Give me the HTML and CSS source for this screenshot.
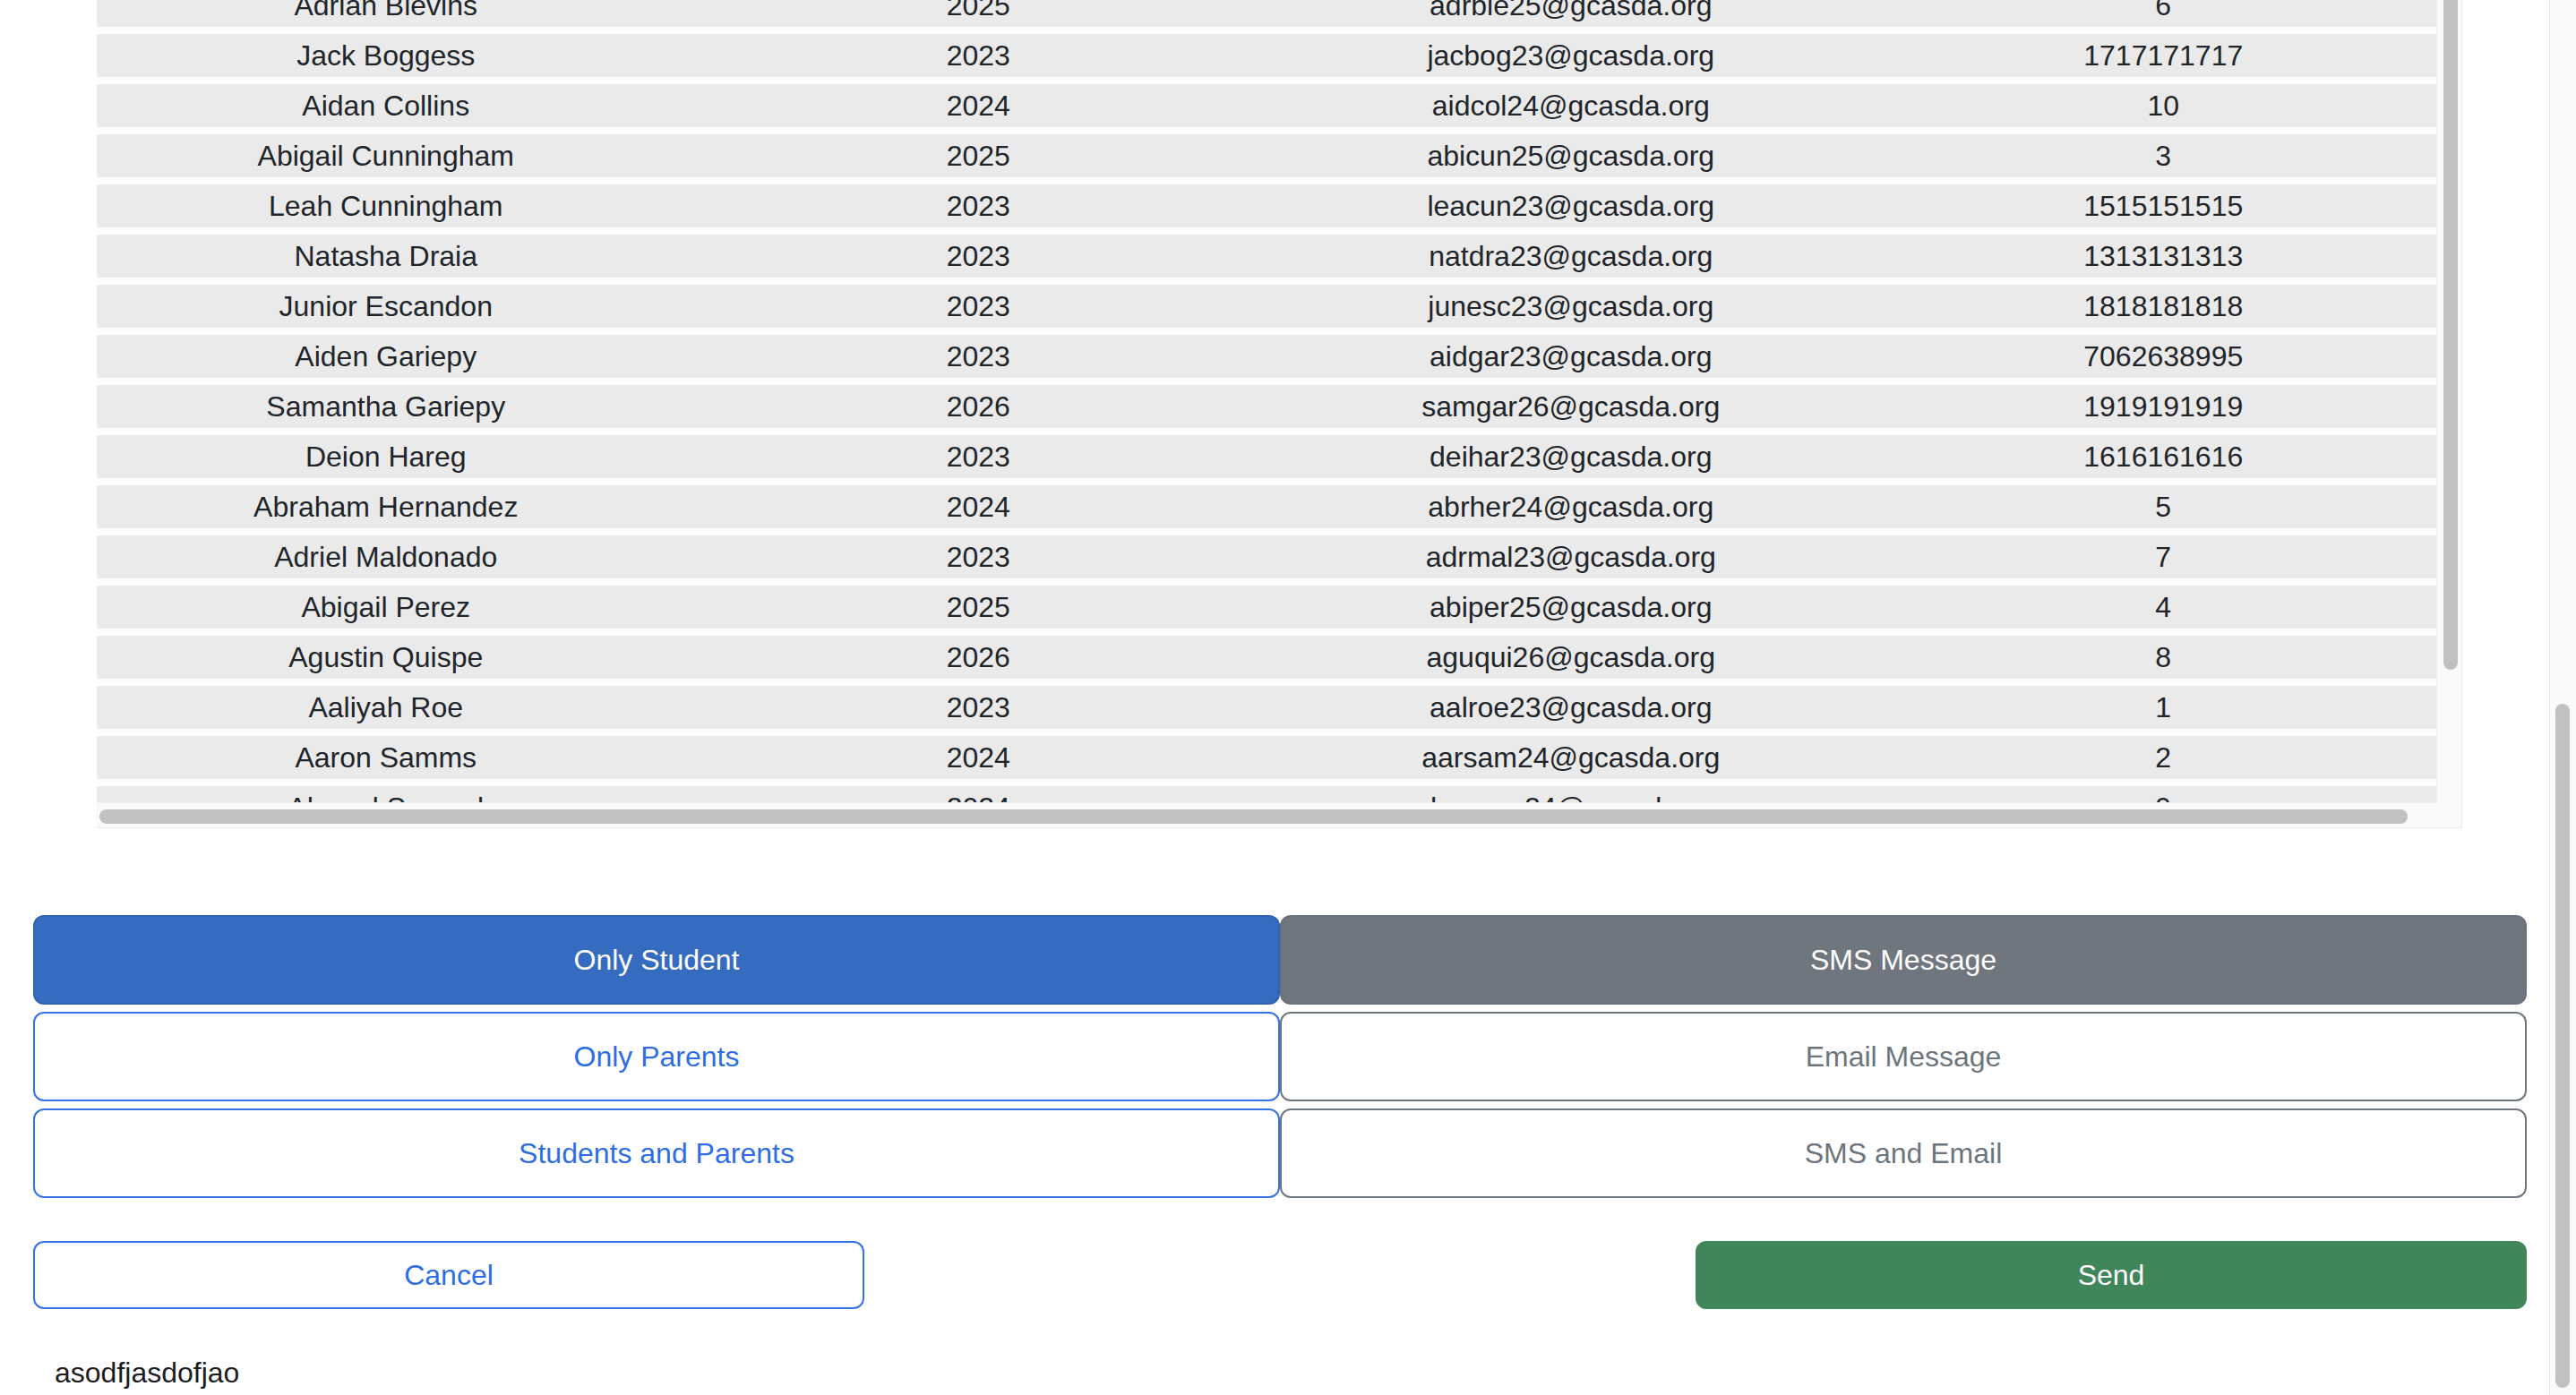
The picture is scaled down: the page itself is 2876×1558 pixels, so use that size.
FILE: index.html
```html
<!DOCTYPE html>
<html lang="en">
<head>
<meta charset="utf-8">
<title>Send Message</title>
<link rel="stylesheet" href="styles.css">
</head>
<body>
<main class="page">
  <div class="roster">
    <div class="roster-view">
      <table class="roster-table">
        <tbody>
          <tr><td>Adrian Blevins</td><td>2025</td><td>adrble25@gcasda.org</td><td>6</td></tr>
          <tr><td>Jack Boggess</td><td>2023</td><td>jacbog23@gcasda.org</td><td>1717171717</td></tr>
          <tr><td>Aidan Collins</td><td>2024</td><td>aidcol24@gcasda.org</td><td>10</td></tr>
          <tr><td>Abigail Cunningham</td><td>2025</td><td>abicun25@gcasda.org</td><td>3</td></tr>
          <tr><td>Leah Cunningham</td><td>2023</td><td>leacun23@gcasda.org</td><td>1515151515</td></tr>
          <tr><td>Natasha Draia</td><td>2023</td><td>natdra23@gcasda.org</td><td>1313131313</td></tr>
          <tr><td>Junior Escandon</td><td>2023</td><td>junesc23@gcasda.org</td><td>1818181818</td></tr>
          <tr><td>Aiden Gariepy</td><td>2023</td><td>aidgar23@gcasda.org</td><td>7062638995</td></tr>
          <tr><td>Samantha Gariepy</td><td>2026</td><td>samgar26@gcasda.org</td><td>1919191919</td></tr>
          <tr><td>Deion Hareg</td><td>2023</td><td>deihar23@gcasda.org</td><td>1616161616</td></tr>
          <tr><td>Abraham Hernandez</td><td>2024</td><td>abrher24@gcasda.org</td><td>5</td></tr>
          <tr><td>Adriel Maldonado</td><td>2023</td><td>adrmal23@gcasda.org</td><td>7</td></tr>
          <tr><td>Abigail Perez</td><td>2025</td><td>abiper25@gcasda.org</td><td>4</td></tr>
          <tr><td>Agustin Quispe</td><td>2026</td><td>aguqui26@gcasda.org</td><td>8</td></tr>
          <tr><td>Aaliyah Roe</td><td>2023</td><td>aalroe23@gcasda.org</td><td>1</td></tr>
          <tr><td>Aaron Samms</td><td>2024</td><td>aarsam24@gcasda.org</td><td>2</td></tr>
          <tr><td>Ahmad Samuel</td><td>2024</td><td>ahmsam24@gcasda.org</td><td>9</td></tr>
        </tbody>
      </table>
    </div>
    <div class="vbar"><div class="vbar-thumb"></div></div>
    <div class="hbar"><div class="hbar-thumb"></div></div>
    <div class="bar-corner"></div>
  </div>

  <div class="choices">
    <button class="btn btn-primary" type="button">Only Student</button>
    <button class="btn btn-secondary" type="button">SMS Message</button>
    <button class="btn btn-outline-primary" type="button">Only Parents</button>
    <button class="btn btn-outline-secondary" type="button">Email Message</button>
    <button class="btn btn-outline-primary" type="button">Students and Parents</button>
    <button class="btn btn-outline-secondary" type="button">SMS and Email</button>
  </div>

  <div class="actions">
    <button class="btn btn-outline-primary action-cancel" type="button">Cancel</button>
    <button class="btn btn-success action-send" type="button">Send</button>
  </div>

  <p class="preview">asodfjasdofjao</p>
</main>
<div class="page-scroll"><div class="page-scroll-thumb"></div></div>
<script src="script.js"></script>
</body>
</html>
```

FILE: styles.css
```css
html,
body {
  height: 100%;
}

body {
  margin: 0;
  display: flex;
  overflow: hidden;
  background: #ffffff;
  color: #212529;
  font-family: "Liberation Sans", Arial, Helvetica, sans-serif;
  font-size: 32px;
}

.page {
  flex: 1 1 auto;
  min-width: 0;
  padding: 0 25px 0 37px;
}

/* window scrollbar */
.page-scroll {
  flex: 0 0 30px;
  box-sizing: border-box;
  background: #fafafa;
  border-left: 1px solid #e6e6e6;
}

.page-scroll-thumb {
  margin: 786px 0 0 6px;
  width: 16px;
  height: 764px;
  border-radius: 8px;
  background: #c1c1c1;
}

/* roster table */
.roster {
  margin: 0 72px 0 71px;
  display: grid;
  grid-template-columns: 1fr 28px;
  grid-template-rows: 896px 28px;
  border-right: 1px solid #ebebeb;
  border-bottom: 1px solid #ebebeb;
}

.roster-view {
  overflow: hidden;
  min-width: 0;
}

.roster-table {
  width: 2646px;
  table-layout: fixed;
  border-collapse: separate;
  border-spacing: 0 8px;
}

.roster-table td {
  height: 48px;
  padding: 0 16px 0 0;
  background: #eaeaea;
  text-align: center;
  line-height: 48px;
  white-space: nowrap;
  overflow: hidden;
}

.vbar {
  background: #f9f9f9;
  border-left: 1px solid #f2f2f2;
}

.vbar-thumb {
  margin-left: 7px;
  width: 16px;
  height: 748px;
  border-radius: 0 0 8px 8px;
  background: #c1c1c1;
}

.hbar {
  background: #f9f9f9;
  border-top: 1px solid #f0f0f0;
}

.hbar-thumb {
  margin: 7px 32px 0 3px;
  height: 16px;
  border-radius: 8px;
  background: #c1c1c1;
}

.bar-corner {
  background: #f9f9f9;
}

/* buttons */
.btn {
  font: inherit;
  font-size: 32px;
  line-height: 48px;
  border: 2px solid transparent;
  border-radius: 12px;
  background: #ffffff;
  padding: 0 24px;
  margin: 0;
  cursor: pointer;
}

.btn-primary {
  background: #366cbf;
  border-color: #2f63b4;
  color: #ffffff;
}

.btn-secondary {
  background: #6f767e;
  border-color: #6a7179;
  color: #ffffff;
}

.btn-outline-primary {
  border-color: #3572e8;
  color: #2f6de4;
}

.btn-outline-secondary {
  border-color: #6f767e;
  color: #6c757d;
}

.btn-success {
  background: #41855a;
  border-color: #41855a;
  color: #ffffff;
}

.choices {
  margin-top: 97px;
  display: grid;
  grid-template-columns: 1fr 1fr;
  grid-auto-rows: 100px;
  row-gap: 8px;
}

.actions {
  margin-top: 48px;
  display: grid;
  grid-template-columns: repeat(3, 1fr);
  grid-template-rows: 76px;
}

.action-cancel {
  grid-column: 1;
}

.action-send {
  grid-column: 3;
}

.preview {
  margin: 53px 0 0 0;
  padding-left: 24px;
  line-height: 36px;
  color: #1d1d1f;
}
```

FILE: script.js
```js
document.querySelector('.roster-view').scrollTop = 26;
```
